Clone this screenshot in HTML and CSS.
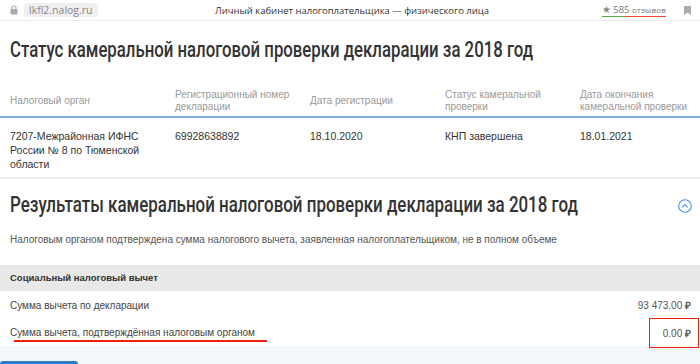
FILE: index.html
```html
<!DOCTYPE html>
<html lang="ru">
<head>
<meta charset="utf-8">
<link rel="stylesheet" href="styles.css">
</head>
<body>
<div class="topbar">
  <div class="tb-left">
    <svg class="lock" width="8" height="10" viewBox="0 0 8 10"><path d="M2 4V3a2 2 0 0 1 4 0v1" fill="none" stroke="#aaa" stroke-width="1.2"/><rect x="0.5" y="4" width="7" height="5.5" rx="1" fill="#aaa"/></svg>
    <span class="url">lkfl2.nalog.ru</span>
  </div>
  <div class="tb-title">Личный кабинет налогоплательщика — физического лица</div>
  <div class="tb-right">
    <span class="reviews"><span class="star">★</span> 585 <span class="small">отзывов</span></span>
    <svg class="bookmark" width="7" height="9" viewBox="0 0 7 9"><path d="M0 0h7v9L3.5 6.5 0 9z" fill="#aaa"/></svg>
  </div>
</div>

<main class="page">
  <section class="card status">
    <h1 class="title"><span class="cond">Статус камеральной налоговой проверки декларации за 2018 год</span></h1>
    <div class="table">
      <div class="thead">
        <div>Налоговый орган</div>
        <div>Регистрационный номер декларации</div>
        <div>Дата регистрации</div>
        <div>Статус камеральной проверки</div>
        <div>Дата окончания камеральной проверки</div>
      </div>
      <div class="trow">
        <div>7207-Межрайонная ИФНС России № 8 по Тюменской области</div>
        <div>69928638892</div>
        <div>18.10.2020</div>
        <div>КНП завершена</div>
        <div>18.01.2021</div>
      </div>
    </div>
  </section>

  <section class="card results">
    <div class="res-head">
      <h2 class="title"><span class="cond wide">Результаты камеральной налоговой проверки декларации за 2018 год</span></h2>
      <svg class="chev" width="14" height="14" viewBox="0 0 14 14"><circle cx="7" cy="7" r="6.3" fill="none" stroke="#4a90d9" stroke-width="1.1"/><path d="M4.2 8.3 7 5.5l2.8 2.8" fill="none" stroke="#4a90d9" stroke-width="1.1"/></svg>
    </div>
    <p class="desc">Налоговым органом подтверждена сумма налогового вычета, заявленная налогоплательщиком, не в полном объеме</p>
    <div class="group">Социальный налоговый вычет</div>
    <div class="line first"><span>Сумма вычета по декларации</span><span class="sum">93 473.00 <b class="rub">₽</b></span></div>
    <div class="line"><span class="underline">Сумма вычета, подтверждённая налоговым органом</span><span class="sum boxed">0.00 <b class="rub">₽</b></span></div>
  </section>

  <div class="footer">
    <div class="btn"></div>
  </div>
</main>
</body>
</html>
```

FILE: styles.css
```css
* { box-sizing: border-box; }
html, body { margin: 0; padding: 0; }
body {
  width: 700px;
  height: 364px;
  overflow: hidden;
  background: #f3f7fa;
  font-family: "Liberation Sans", Arial, sans-serif;
  color: #333;
}
.topbar {
  height: 21px;
  background: #fff;
  border-bottom: 1px solid #ececec;
  display: grid;
  grid-template-columns: 1fr auto 1fr;
  align-items: center;
  font-family: "Open Sans", sans-serif;
  font-size: 9.5px;
  color: #333;
}
.tb-left {
  display: flex;
  align-items: center;
  gap: 6px;
  padding-left: 10px;
}
.lock { display: block; }
.url {
  background: #f0f0f0;
  color: #888;
  border-radius: 4px;
  padding: 0 5px;
  font-size: 10.5px;
  line-height: 14px;
}
.tb-title { white-space: nowrap; padding-left: 4px; }
.tb-right {
  display: flex;
  justify-content: flex-end;
  align-items: center;
  gap: 18px;
  padding-right: 9px;
}
.reviews {
  color: #777;
  font-size: 9.5px;
  line-height: 12px;
  border-bottom: 1px solid;
  border-image: linear-gradient(90deg, #4caf50 0 38%, #f44336 38% 100%) 1;
}
.reviews .star { color: #888; }
.reviews .small { font-size: 8px; letter-spacing: 0.2px; }
.bookmark { display: block; }

.page { display: flex; flex-direction: column; }
.card { background: #fff; }
.status { border-bottom: 2px solid #ececec; }
.title {
  margin: 0;
  font-family: Roboto, "Liberation Sans", sans-serif;
  font-weight: 500;
  font-size: 22.5px;
  line-height: 30px;
  color: #333;
  white-space: nowrap;
  overflow: hidden;
}
.cond {
  display: inline-block;
  transform: scaleX(0.745);
  transform-origin: 0 50%;
}
.cond.wide { transform: scaleX(0.752); }
.status > .title { padding: 13px 10px 0; }
.table { margin-top: 25px; }
.thead, .trow {
  display: grid;
  grid-template-columns: 165px 135px 135px 135px 1fr;
  padding-left: 10px;
}
.thead {
  font-size: 10px;
  line-height: 12px;
  color: #999;
  align-items: center;
  padding-bottom: 3px;
  border-bottom: 2px solid #7fb0e3;
}
.thead > div:nth-child(1) { padding-right: 30px; }
.trow {
  font-size: 10.5px;
  line-height: 14px;
  color: #333;
  padding-top: 11px;
  padding-bottom: 6px;
}
.trow > div:first-child { padding-right: 28px; }

.res-head {
  display: flex;
  align-items: center;
  padding: 10px 8px 0 10px;
}
.res-head .title {
  flex: 1;
  min-width: 0;
}
.chev { display: block; flex-shrink: 0; margin-top: 4px; }
.desc {
  margin: 0;
  padding: 14px 10px 0;
  font-size: 10px;
  line-height: 14px;
  color: #555;
}
.group {
  margin-top: 18px;
  background: #e8e8e8;
  font-weight: 700;
  font-size: 9.5px;
  line-height: 26px;
  padding: 0 10px;
  color: #333;
}
.line {
  display: flex;
  justify-content: space-between;
  align-items: center;
  font-size: 10px;
  color: #444;
  padding: 0 9px 0 10px;
  height: 27px;
}
.line.first { height: 28px; }
.sum { color: #555; }
.rub { font-size: 10px; font-weight: 700; }
.underline { position: relative; }
.underline::after {
  content: "";
  position: absolute;
  left: 4px;
  right: -12px;
  bottom: -4px;
  height: 2px;
  background: #f0200c;
}
.boxed { position: relative; }
.boxed::before {
  content: "";
  position: absolute;
  left: -14px;
  right: -8px;
  top: -8px;
  bottom: -8px;
  border: 1.5px solid #f0200c;
}
.footer {
  padding-top: 15px;
  background: #f3f7fa;
}
.btn {
  width: 78px;
  height: 20px;
  background: #2a7ad0;
  border-radius: 3px;
}
```
